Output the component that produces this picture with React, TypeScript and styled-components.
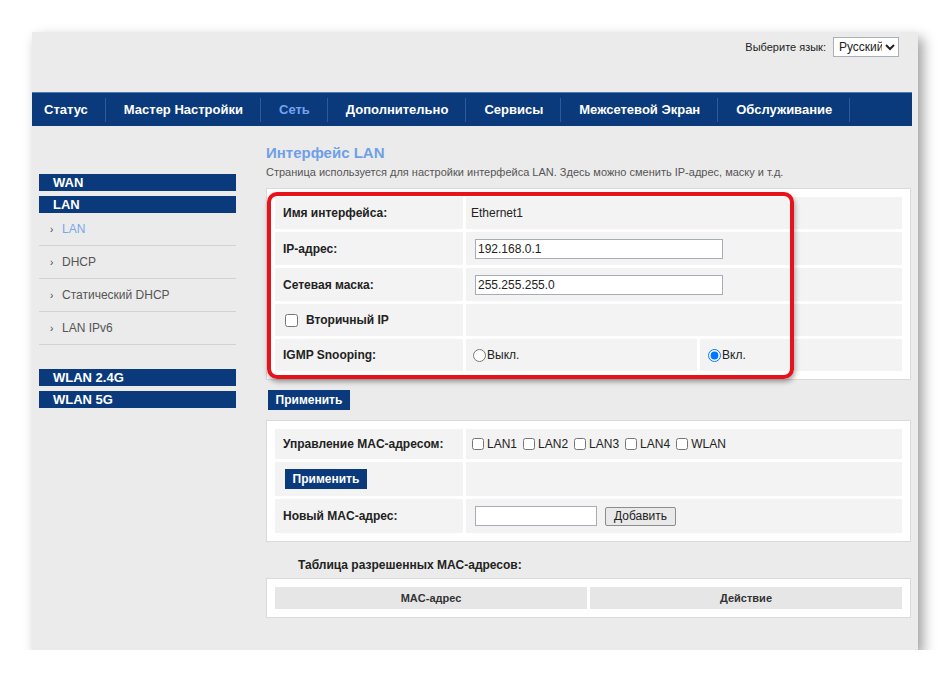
import React from 'react';
import styled, { createGlobalStyle } from 'styled-components';

const GlobalStyle = createGlobalStyle`
  html, body {
    margin: 0;
    padding: 0;
    background: #ffffff;
    font-family: "Liberation Sans", Arial, sans-serif;
  }
  * {
    box-sizing: border-box;
  }
`;

const BLUE = '#0b3a7c';

const Page = styled.div`
  padding: 32px 0 0 32px;
`;

const Panel = styled.div`
  width: 886px;
  height: 618px;
  background: #ebebeb;
  box-shadow: 5px 6px 12px rgba(0, 0, 0, 0.38);
`;

const Header = styled.div`
  height: 60px;
  display: flex;
  justify-content: flex-end;
  align-items: flex-start;
  padding: 5px 19px 0 0;
`;

const LangLabel = styled.span`
  font-size: 11px;
  color: #222;
  line-height: 20px;
  margin-right: 7px;
`;

const LangSelect = styled.select`
  height: 20px;
  width: 66px;
  font-family: "Liberation Sans", Arial, sans-serif;
  font-size: 12px;
  color: #222;
  border: 1px solid #a9b0b8;
  background: #fff;
  padding: 0 0 0 1px;
`;

const Nav = styled.div`
  width: 880px;
  height: 34px;
  background: ${BLUE};
  border-top: 1px solid #4f79b3;
  display: flex;
  align-items: center;
`;

const NavItem = styled.div<{ $active?: boolean; $first?: boolean }>`
  height: 24px;
  line-height: 24px;
  padding: 0 17px 0 ${({ $first }) => ($first ? '12px' : '18px')};
  border-right: 1px solid #30599a;
  color: ${({ $active }) => ($active ? '#74a4ec' : '#ffffff')};
  font-size: 13px;
  font-weight: bold;
  white-space: nowrap;
`;

const Main = styled.div`
  display: flex;
  align-items: flex-start;
`;

const Sidebar = styled.div`
  width: 197px;
  margin-left: 7px;
  padding-top: 48px;
`;

const SideBar = styled.div`
  height: 17px;
  line-height: 17px;
  background: ${BLUE};
  color: #fff;
  font-weight: bold;
  font-size: 13px;
  padding-left: 14px;
  margin-bottom: 5px;
`;

const SubList = styled.div`
  margin-top: -5px;
  margin-bottom: 24px;
`;

const SubItem = styled.div<{ $active?: boolean }>`
  height: 33px;
  border-bottom: 1px solid #d2d2d2;
  display: flex;
  align-items: center;
  padding-left: 11px;
  font-size: 12px;
  color: ${({ $active }) => ($active ? '#78a6ec' : '#555555')};
`;

const Bullet = styled.span`
  font-size: 10px;
  color: #444;
  width: 12px;
`;

const Content = styled.div`
  width: 645px;
  margin-left: 30px;
  padding-top: 18px;
`;

const Title = styled.div`
  font-size: 15px;
  font-weight: bold;
  line-height: 18px;
  color: #6f9fe6;
`;

const Description = styled.div`
  font-size: 11px;
  line-height: 14px;
  color: #555;
  margin-top: 3px;
`;

const Box = styled.div<{ $top: number }>`
  position: relative;
  margin-top: ${({ $top }) => $top}px;
  background: #fff;
  border: 1px solid #dadada;
  padding: 8px;
  display: flex;
  flex-direction: column;
  gap: 3px;
`;

const Row = styled.div<{ $h: number; $cols?: string }>`
  display: grid;
  grid-template-columns: ${({ $cols }) => $cols || '188px 1fr'};
  gap: 3px;
  height: ${({ $h }) => $h}px;
`;

const Cell = styled.div<{ $pad?: number }>`
  background: #f3f3f3;
  display: flex;
  align-items: center;
  padding-left: ${({ $pad }) => ($pad === undefined ? 8 : $pad)}px;
  font-size: 12px;
  color: #222;
`;

const Label = styled.span`
  font-weight: bold;
  font-size: 12px;
  color: #222;
`;

const TextInput = styled.input<{ $w: number }>`
  width: ${({ $w }) => $w}px;
  height: 20px;
  margin-left: 4px;
  border: 1px solid #a6adb5;
  background: #fff;
  padding: 0 2px;
  font-family: "Liberation Sans", Arial, sans-serif;
  font-size: 12px;
  color: #222;
  outline: none;
`;

const Check = styled.input`
  width: 12px;
  height: 12px;
  margin: 0 3px 0 0;
`;

const BigCheck = styled.input`
  width: 13px;
  height: 13px;
  margin: 0 8px 0 2px;
`;

const Radio = styled.input`
  width: 13px;
  height: 13px;
  margin: 0 1px 0 0;
`;

const Option = styled.label<{ $gap?: number }>`
  display: flex;
  align-items: center;
  margin-right: ${({ $gap }) => ($gap === undefined ? 10 : $gap)}px;
  font-size: 12px;
  color: #222;
`;

const ApplyButton = styled.button<{ $ml?: number }>`
  width: 82px;
  height: 20px;
  margin-left: ${({ $ml }) => $ml || 0}px;
  background: ${BLUE};
  border: none;
  color: #fff;
  font-family: "Liberation Sans", Arial, sans-serif;
  font-size: 12px;
  font-weight: bold;
  padding: 0;
`;

const ApplyWrap = styled.div`
  margin-top: 10px;
  padding-left: 2px;
`;

const GreyButton = styled.button`
  width: 71px;
  height: 19px;
  margin-left: 8px;
  background: #e9e9e9;
  border: 1px solid #8d8d8d;
  border-radius: 2px;
  font-family: "Liberation Sans", Arial, sans-serif;
  font-size: 12px;
  color: #222;
  padding: 0;
`;

const Highlight = styled.div`
  position: absolute;
  left: 0;
  top: 3px;
  width: 527px;
  height: 187px;
  border: 4px solid #e8121b;
  border-radius: 10px;
  box-shadow: 1px 3px 5px rgba(0, 0, 0, 0.35);
  pointer-events: none;
`;

const TableHeading = styled.div`
  margin-top: 16px;
  padding-left: 32px;
  font-size: 12px;
  font-weight: bold;
  line-height: 14px;
  color: #222;
`;

const HeadCell = styled.div`
  background: #e6e6e6;
  display: flex;
  align-items: center;
  justify-content: center;
  font-size: 11px;
  font-weight: bold;
  color: #333;
`;

const navItems = [
  'Статус',
  'Мастер Настройки',
  'Сеть',
  'Дополнительно',
  'Сервисы',
  'Межсетевой Экран',
  'Обслуживание',
];

const subItems = ['LAN', 'DHCP', 'Статический DHCP', 'LAN IPv6'];

const ports = ['LAN1', 'LAN2', 'LAN3', 'LAN4', 'WLAN'];

export default function App() {
  return (
    <Page>
      <GlobalStyle />
      <Panel>
        <Header>
          <LangLabel>Выберите язык:</LangLabel>
          <LangSelect defaultValue="ru">
            <option value="ru">Русский</option>
          </LangSelect>
        </Header>
        <Nav>
          {navItems.map((item, i) => (
            <NavItem key={item} $first={i === 0} $active={item === 'Сеть'}>
              {item}
            </NavItem>
          ))}
        </Nav>
        <Main>
          <Sidebar>
            <SideBar>WAN</SideBar>
            <SideBar>LAN</SideBar>
            <SubList>
              {subItems.map((item) => (
                <SubItem key={item} $active={item === 'LAN'}>
                  <Bullet>›</Bullet>
                  {item}
                </SubItem>
              ))}
            </SubList>
            <SideBar>WLAN 2.4G</SideBar>
            <SideBar>WLAN 5G</SideBar>
          </Sidebar>
          <Content>
            <Title>Интерфейс LAN</Title>
            <Description>
              Страница используется для настройки интерфейса LAN. Здесь можно сменить IP-адрес, маску и т.д.
            </Description>
            <Box $top={9}>
              <Row $h={32}>
                <Cell>
                  <Label>Имя интерфейса:</Label>
                </Cell>
                <Cell $pad={5}>Ethernet1</Cell>
              </Row>
              <Row $h={33}>
                <Cell>
                  <Label>IP-адрес:</Label>
                </Cell>
                <Cell $pad={5}>
                  <TextInput $w={248} defaultValue="192.168.0.1" />
                </Cell>
              </Row>
              <Row $h={33}>
                <Cell>
                  <Label>Сетевая маска:</Label>
                </Cell>
                <Cell $pad={5}>
                  <TextInput $w={248} defaultValue="255.255.255.0" />
                </Cell>
              </Row>
              <Row $h={32}>
                <Cell>
                  <BigCheck type="checkbox" />
                  <Label>Вторичный IP</Label>
                </Cell>
                <Cell />
              </Row>
              <Row $h={32} $cols="188px 231px 1fr">
                <Cell>
                  <Label>IGMP Snooping:</Label>
                </Cell>
                <Cell $pad={7}>
                  <Option>
                    <Radio type="radio" name="igmp" />
                    Выкл.
                  </Option>
                </Cell>
                <Cell $pad={8}>
                  <Option>
                    <Radio type="radio" name="igmp" defaultChecked />
                    Вкл.
                  </Option>
                </Cell>
              </Row>
              <Highlight />
            </Box>
            <ApplyWrap>
              <ApplyButton>Применить</ApplyButton>
            </ApplyWrap>
            <Box $top={10}>
              <Row $h={30}>
                <Cell>
                  <Label>Управление MAC-адресом:</Label>
                </Cell>
                <Cell $pad={6}>
                  {ports.map((p) => (
                    <Option key={p} $gap={6}>
                      <Check type="checkbox" />
                      {p}
                    </Option>
                  ))}
                </Cell>
              </Row>
              <Row $h={34}>
                <Cell $pad={0}>
                  <ApplyButton $ml={10}>Применить</ApplyButton>
                </Cell>
                <Cell />
              </Row>
              <Row $h={34}>
                <Cell>
                  <Label>Новый MAC-адрес:</Label>
                </Cell>
                <Cell $pad={5}>
                  <TextInput $w={122} />
                  <GreyButton>Добавить</GreyButton>
                </Cell>
              </Row>
            </Box>
            <TableHeading>Таблица разрешенных MAC-адресов:</TableHeading>
            <Box $top={6}>
              <Row $h={22} $cols="312px 1fr">
                <HeadCell>MAC-адрес</HeadCell>
                <HeadCell>Действие</HeadCell>
              </Row>
            </Box>
          </Content>
        </Main>
      </Panel>
    </Page>
  );
}
